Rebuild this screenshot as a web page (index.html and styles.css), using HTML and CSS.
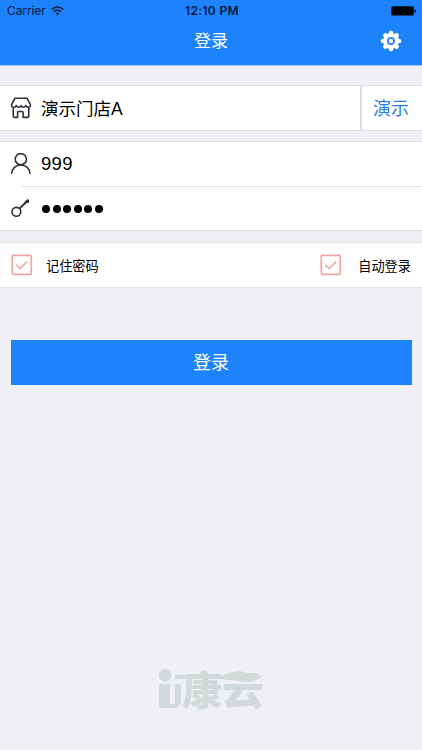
FILE: index.html
```
<!DOCTYPE html>
<html lang="zh-CN">
<head>
<meta charset="utf-8">
<meta name="viewport" content="width=device-width">
<title>登录</title>
<link rel="stylesheet" href="styles.css">
</head>
<body>
<header>
  <div class="status">
    <div class="carrier"><span>Carrier</span>
      <svg width="13" height="10" viewBox="0 0 13 10" fill="none" stroke="#06183a" stroke-width="1.6"><path d="M.8 3.4Q6.5-1.4 12.2 3.4M2.9 5.7Q6.5 2.7 10.1 5.7"/><path d="M4.5 7.3Q6.5 5.8 8.5 7.3L6.5 9.5Z" fill="#06183a" stroke="none"/></svg>
    </div>
    <span class="time">12:10 PM</span>
    <svg class="battery" width="26" height="10" viewBox="0 0 26 10"><rect x=".4" y=".2" width="22.4" height="9.4" rx="1.5"/><path d="M23.6 3.2q1.6 0 1.6 1.7t-1.6 1.7z"/></svg>
  </div>
  <div class="nav">
    <h1>登录</h1>
    <svg class="gear" width="22" height="22" viewBox="-11 -11 22 22">
      <g fill="#fff"><circle r="8"/>
        <g id="teeth"><rect x="-2.1" y="-10.2" width="4.2" height="20.4" rx="1.6"/><rect x="-10.2" y="-2.1" width="20.4" height="4.2" rx="1.6"/></g>
        <use href="#teeth" transform="rotate(45)"/></g>
      <circle r="3.1" fill="#fff" stroke="#2383f5" stroke-width="1.7"/>
    </svg>
  </div>
</header>
<main>
  <section class="panel store">
    <div class="row"><svg class="icon" width="22" height="22" viewBox="0 0 22 22"><path d="M5 1.2H17L20.4 7.6Q20.7 10.3 18.3 10.3Q16.5 10.3 15.8 8.6Q14.8 10.3 13.3 10.3Q11.8 10.3 11 8.6Q10.2 10.3 8.7 10.3Q7.2 10.3 6.2 8.6Q5.5 10.3 3.7 10.3Q1.3 10.3 1.6 7.6ZM3.2 10.3V19.1Q3.2 20.4 4.5 20.4H7.6V15.3Q7.6 14.5 8.4 14.5H12.3Q13.1 14.5 13.1 15.3V20.4H17.5Q18.8 20.4 18.8 19.1V10.3"/></svg><span class="value">演示门店A</span></div>
    <a class="demo">演示</a>
  </section>
  <section class="panel account">
    <div class="row"><svg class="icon" width="22" height="22" viewBox="0 0 22 22"><circle cx="10.8" cy="6.2" r="5.6"/><path d="M1.6 21C1.7 15.5 5.8 12 10.8 12S19.9 15.5 20 21"/></svg><span class="value num">999</span></div>
    <hr>
    <div class="row"><svg class="icon" width="22" height="22" viewBox="0 0 22 22"><circle cx="6.4" cy="13.8" r="4.4"/><path d="M9.5 10.6L18.5 1.8" stroke-width="1.9"/><path d="M14.8 5L17.6 2.6L18.4 4.8" stroke-width="2"/></svg>
      <span class="dots"><i></i><i></i><i></i><i></i><i></i><i></i></span></div>
  </section>
  <section class="panel options">
    <label><svg width="22" height="22" viewBox="0 0 22 22"><rect x="1.3" y="1.3" width="19" height="19" rx="1"/><path d="M5.3 10.8L9.2 14.5L16.3 7.5"/></svg><span>记住密码</span></label>
    <label><svg width="22" height="22" viewBox="0 0 22 22"><rect x="1.3" y="1.3" width="19" height="19" rx="1"/><path d="M5.3 10.8L9.2 14.5L16.3 7.5"/></svg><span>自动登录</span></label>
  </section>
  <button>登录</button>
</main>
<footer>
  <svg width="110" height="80" viewBox="0 -16 110 80" fill="#d2d9d9">
    <circle cx="8" cy="8.2" r="6.2"/>
    <path d="M2 17H13V37H18V17H24V36L19 41H2ZM18 8H28V12H18Z"/>
    <text x="25" y="37.6" textLength="40" lengthAdjust="spacingAndGlyphs">康</text>
    <text x="65" y="37.6" textLength="42" lengthAdjust="spacingAndGlyphs">云</text>
    <path d="M54 9C68 10 73 3.5 83 4.2C91 5 95 10 106 8C101 14 93 16 85 14.5C77 12.5 70 14 64 12L54 12Z"/>
  </svg>
</footer>
</body>
</html>
```
FILE: styles.css
```
* { box-sizing: border-box; }
body { margin: 0; height: 750px; display: flex; flex-direction: column; background: #efeff5; color: #000; font-family: "Liberation Sans", "Noto Sans CJK SC", sans-serif; overflow: hidden; }
svg { display: block; flex: none; }
header { height: 65px; background: #1c83fd; box-shadow: 0 1px #a9cdf9; }
.status { height: 22px; display: grid; grid-template-columns: 1fr auto 1fr; align-items: center; padding: 0 5px 0 7px; font: 12px/22px Inter, sans-serif; color: #06183a; }
.carrier { display: flex; align-items: center; gap: 5px; letter-spacing: -.1px; }
.time { font-weight: 600; letter-spacing: .35px; }
.battery { justify-self: end; }
.nav { height: 43px; display: grid; grid-template-columns: 1fr auto 1fr; align-items: center; padding: 0 20px 5px; }
h1 { grid-column: 2; margin: 0; padding-top: 2px; color: #fff; font-size: 17px; font-weight: 400; line-height: 24px; }
.gear { justify-self: end; }
main { flex: 1; padding-top: 20px; }
.panel { background: #fff; border: solid #e1e1e7; border-width: 1px 0; margin-bottom: 11px; }
.store { height: 46px; display: flex; }
.row { flex: 1; height: 44px; display: flex; align-items: center; padding-left: 10px; }
.store .row { height: 43px; }
.icon { fill: none; stroke: #303039; stroke-width: 1.6; stroke-linejoin: round; }
.value { margin-left: 9px; font-size: 17.5px; line-height: 24px; }
.store .value { padding-top: 2px; }
.num { font: 18.5px/24px "Liberation Sans", sans-serif; letter-spacing: .3px; }
.demo { width: 62px; border-left: 2px solid #dedee2; color: #2480ef; font-size: 18px; line-height: 46px; text-align: center; padding-right: 2px; }
.account { height: 90px; margin-top: -1px; }
hr { height: 1px; margin: 0 0 0 21px; border: 0; background: #e2e2e6; }
.account hr + .row { height: 43px; }
.dots { display: flex; gap: 2.5px; margin-left: 10px; padding-top: 1px; }
.dots i { width: 8px; height: 8px; border-radius: 50%; background: #000; }
.options { height: 46px; display: flex; justify-content: space-between; padding: 0 11px; }
label { display: flex; align-items: center; gap: 13px; font-size: 13.2px; }
label + label { gap: 16px; }
label svg { fill: none; stroke: #eaa79f; stroke-width: 1.7; }
button { display: block; width: 401px; height: 45px; margin: 52px 0 0 10.5px; padding: 2px 0 0; border: 0; background: #1c83fd; color: #fff; font: 18px/43px "Liberation Sans", "Noto Sans CJK SC", sans-serif; }
footer { height: 99px; padding-left: 157px; }
footer text { font: 900 40px "Noto Sans CJK SC", sans-serif; }
```
